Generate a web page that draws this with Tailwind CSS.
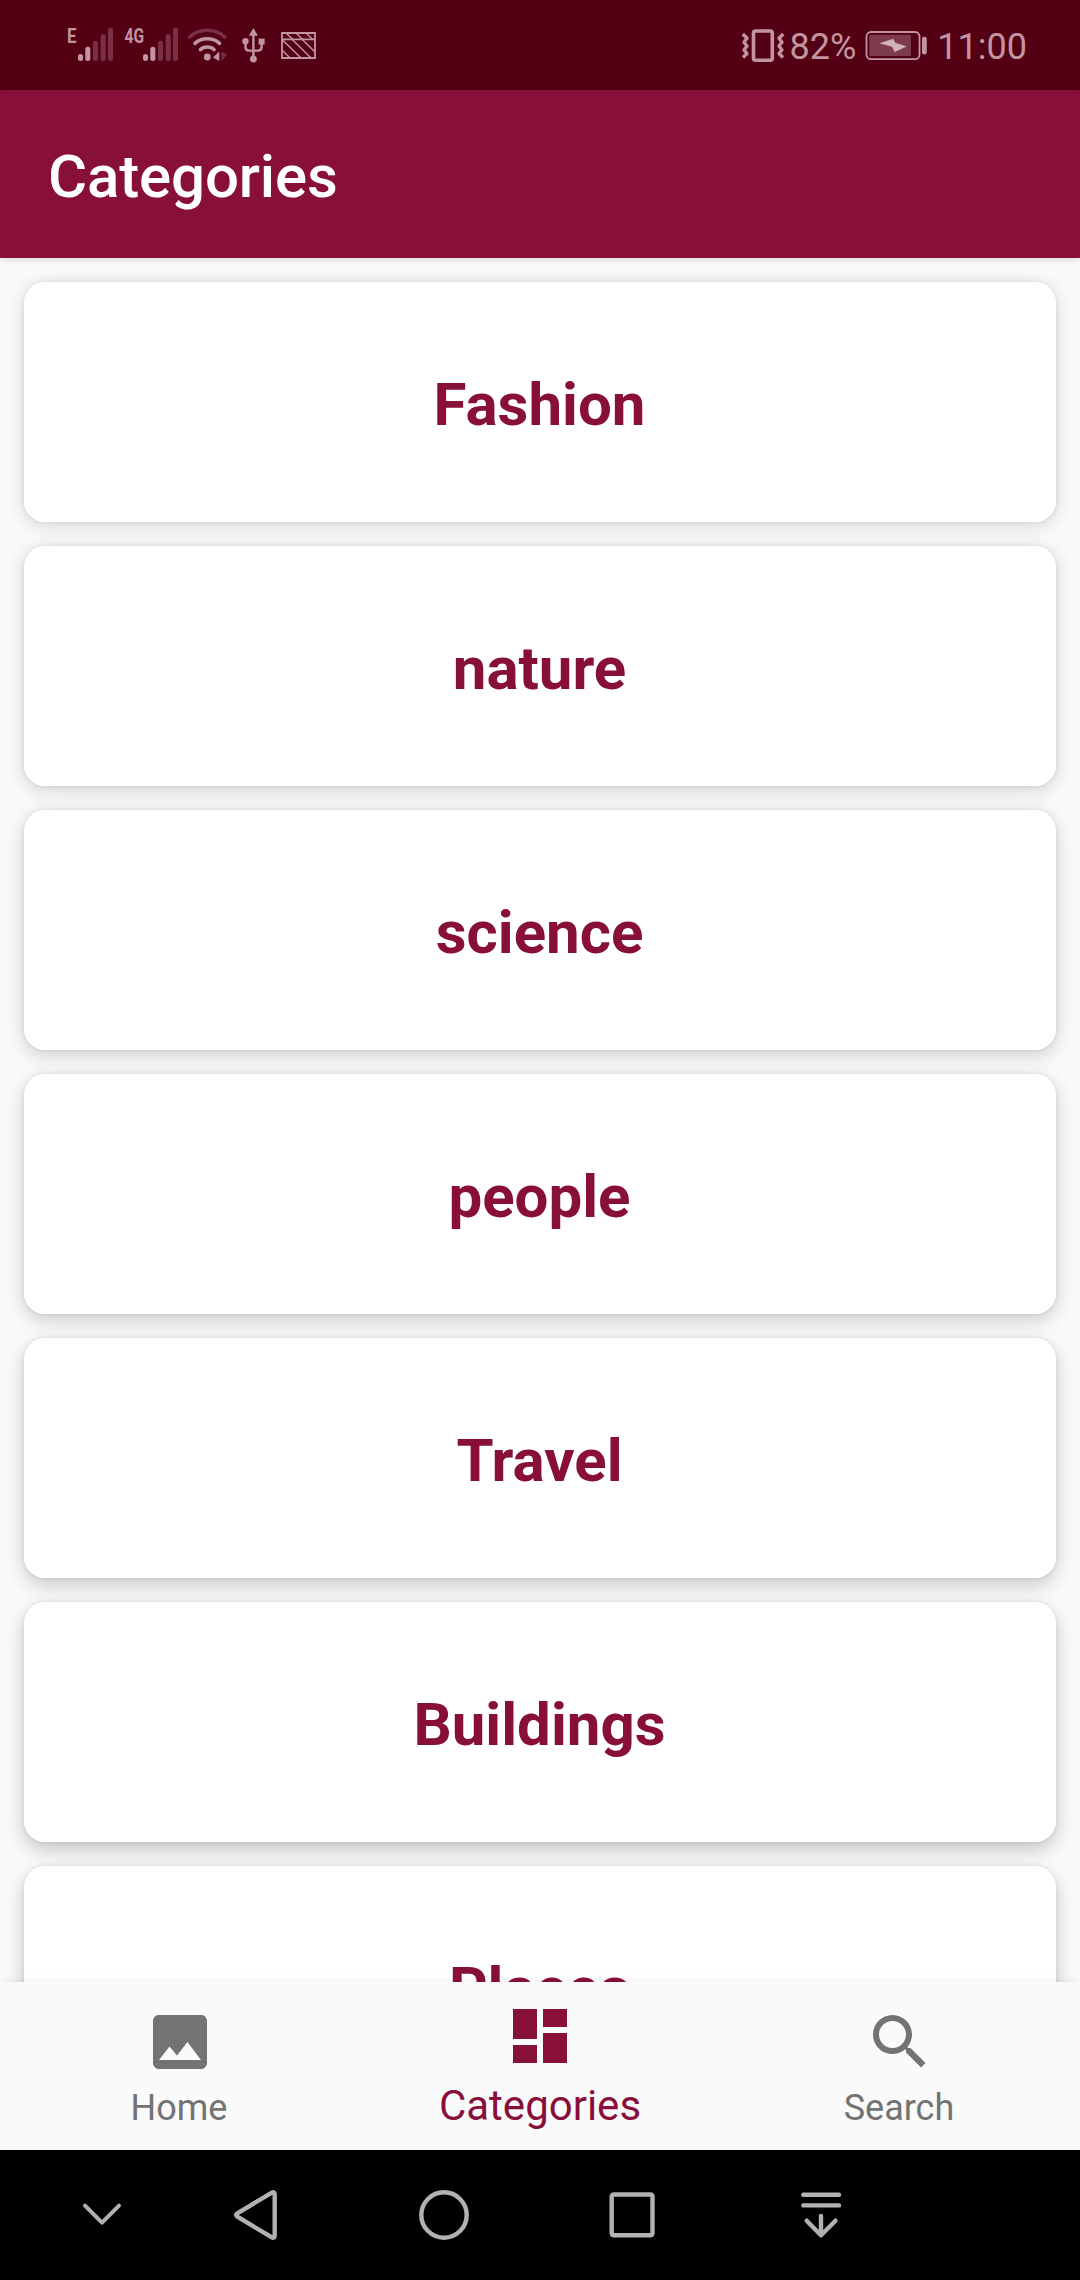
<!DOCTYPE html>
<html lang="en">
<head>
<meta charset="utf-8">
<title>Categories</title>
<script src="https://cdn.jsdelivr.net/npm/@tailwindcss/browser@4"></script>
</head>
<body class="w-[1080px] h-[2280px] flex flex-col overflow-hidden bg-[#fafafa] font-[Roboto,sans-serif]">

<!-- Status bar -->
<header class="h-[90px] shrink-0 flex items-center justify-between bg-[#530015] text-[#c294a0] pl-[66px] pr-[53px]">
  <div class="flex h-full">
    <svg class="w-[56px] h-[90px]" viewBox="66 0 56 90" fill="currentColor">
      <text x="67" y="42.7" font-size="20" font-weight="700" textLength="9.5" lengthAdjust="spacingAndGlyphs">E</text>
      <rect x="78" y="54" width="5" height="7" rx="2.5"/><rect x="85.3" y="46.7" width="5" height="14.3" rx="2.5"/>
      <g fill="#7a3043"><rect x="93" y="40.7" width="5" height="20.3" rx="2.5"/><rect x="100.7" y="34" width="5" height="27" rx="2.5"/><rect x="108" y="27.7" width="5" height="33.3" rx="2.5"/></g>
    </svg>
    <svg class="w-[62px] h-[90px]" viewBox="122 0 62 90" fill="currentColor">
      <text x="124.5" y="42.7" font-size="20" font-weight="700" textLength="19.5" lengthAdjust="spacingAndGlyphs">4G</text>
      <rect x="143" y="54" width="5" height="7" rx="2.5"/><rect x="150.3" y="46.7" width="5" height="14.3" rx="2.5"/>
      <g fill="#7a3043"><rect x="158" y="40.7" width="5" height="20.3" rx="2.5"/><rect x="165.7" y="34" width="5" height="27" rx="2.5"/><rect x="173" y="27.7" width="5" height="33.3" rx="2.5"/></g>
    </svg>
    <svg class="w-[54px] h-[90px]" viewBox="184 0 54 90" fill="none" stroke="currentColor" stroke-width="3.6" stroke-linecap="round">
      <path stroke="#7a3043" d="M189.7 37Q197 30.2 207.3 30.2T224.7 37"/>
      <path d="M195 43.3Q200 38.8 207.3 38.8T219.5 43.3M200.5 49.6Q203 47 207.3 47T214 49.6"/>
      <circle cx="207.3" cy="57" r="3.4" fill="currentColor" stroke="none"/>
      <path d="M219.3 51.5V61L213 57.5Z" fill="currentColor" stroke="none"/>
      <path d="M221.5 51.5V61L227 54.5Z" fill="#7a3043" stroke="none"/>
    </svg>
    <svg class="w-[36px] h-[90px]" viewBox="238 0 36 90" fill="currentColor">
      <path d="M253.4 28L258 35.8H248.8Z"/><circle cx="253.4" cy="59" r="3.4"/><circle cx="245.5" cy="41.3" r="3.2"/><rect x="258.6" y="38.6" width="6" height="6"/>
      <path fill="none" stroke="currentColor" stroke-width="2.4" d="M253.4 34V59M245.5 42V47Q245.5 50.6 249 50.6H258Q261.6 50.6 261.6 47V43"/>
    </svg>
    <svg class="w-[44px] h-[90px]" viewBox="274 0 44 90" fill="none" stroke="currentColor" stroke-width="1.8">
      <path d="M282 33H315V58H282ZM282 39.3H315"/>
      <path stroke-width="1.5" d="M286 33L292.5 39.3M296 33L302.5 39.3M306 33L312.5 39.3M282 39.5L301 58M292 39.3L311 58M302 39.3L315 52M282 50L290 58"/>
    </svg>
  </div>
  <div class="flex h-full items-center text-[36px] leading-[42px]">
    <svg class="w-[36px] h-[90px]" viewBox="741 0 36 90" fill="none" stroke="currentColor" stroke-width="3.6">
      <rect x="753.5" y="31" width="18.8" height="29.3" rx="2"/>
      <path stroke-width="3.4" stroke-linejoin="round" d="M742.8 34L747 38.3L744 42.2L747 46L744 50L747 53.5L743 57.5"/>
    </svg>
    <svg class="w-[9px] h-[90px] -ml-px mr-[5px]" viewBox="776 0 9 90" fill="none" stroke="currentColor" stroke-width="3.4" stroke-linejoin="round">
      <path d="M783.2 34L779 38.3L782 42.2L779 46L782 50L779 53.5L783 57.5"/>
    </svg>
    <span class="pt-[3px]">82%</span>
    <svg class="w-[64px] h-[90px] ml-[8px] mr-[9px]" viewBox="864 0 64 90">
      <rect x="866.5" y="32" width="53" height="27.2" rx="4.5" fill="none" stroke="currentColor" stroke-width="1.8"/>
      <rect x="869.3" y="34.7" width="41.7" height="21.3" rx="1.5" fill="#7f3b4e"/>
      <path fill="#d2b2bb" d="M879.3 43.3L893.3 38.7L895.3 42.7L906.7 46.6L894.7 52L892 46.7Z"/>
      <rect x="922" y="36.7" width="4.8" height="17.8" rx="2.2" fill="currentColor"/>
    </svg>
    <span class="pt-[3px]">11:00</span>
  </div>
</header>

<!-- App bar -->
<div class="relative z-10 h-[168px] shrink-0 flex items-center bg-[#880f3a] px-12 shadow-[0_1px_7px_rgba(0,0,0,0.16)]">
  <h1 class="text-white text-[60px] leading-[71px] font-medium pt-[5px] tracking-[-0.15px]">Categories</h1>
</div>

<!-- Category list -->
<main class="isolate flex-1 min-h-0 overflow-hidden flex flex-col gap-6 px-6 pt-6 text-[#880f3a] text-[60px] leading-[71px] font-bold">
  <div class="relative h-[240px] shrink-0 rounded-[21px] bg-white flex items-center justify-center pt-[5px] pr-px before:absolute before:inset-0 before:-z-10 before:rounded-[21px] before:shadow-[0_0_5px_rgba(0,0,0,0.09),0_3px_20px_rgba(0,0,0,0.15)]">Fashion</div>
  <div class="relative h-[240px] shrink-0 rounded-[21px] bg-white flex items-center justify-center pt-[5px] pr-px before:absolute before:inset-0 before:-z-10 before:rounded-[21px] before:shadow-[0_0_5px_rgba(0,0,0,0.09),0_4px_20px_rgba(0,0,0,0.16)]">nature</div>
  <div class="relative h-[240px] shrink-0 rounded-[21px] bg-white flex items-center justify-center pt-[5px] pr-px before:absolute before:inset-0 before:-z-10 before:rounded-[21px] before:shadow-[0_0_5px_rgba(0,0,0,0.09),0_5px_20px_rgba(0,0,0,0.175)]">science</div>
  <div class="relative h-[240px] shrink-0 rounded-[21px] bg-white flex items-center justify-center pt-[5px] pr-px before:absolute before:inset-0 before:-z-10 before:rounded-[21px] before:shadow-[0_0_5px_rgba(0,0,0,0.09),0_6px_20px_rgba(0,0,0,0.19)]">people</div>
  <div class="relative h-[240px] shrink-0 rounded-[21px] bg-white flex items-center justify-center pt-[5px] pr-px before:absolute before:inset-0 before:-z-10 before:rounded-[21px] before:shadow-[0_0_5px_rgba(0,0,0,0.09),0_7px_20px_rgba(0,0,0,0.2)]">Travel</div>
  <div class="relative h-[240px] shrink-0 rounded-[21px] bg-white flex items-center justify-center pt-[5px] pr-px before:absolute before:inset-0 before:-z-10 before:rounded-[21px] before:shadow-[0_0_5px_rgba(0,0,0,0.09),0_8px_20px_rgba(0,0,0,0.21)]">Buildings</div>
  <div class="relative h-[240px] shrink-0 rounded-[21px] bg-white flex items-center justify-center pt-[5px] pr-px before:absolute before:inset-0 before:-z-10 before:rounded-[21px] before:shadow-[0_0_5px_rgba(0,0,0,0.09),0_9px_20px_rgba(0,0,0,0.22)]">Places</div>
</main>

<!-- Bottom navigation -->
<nav class="relative z-10 h-[168px] shrink-0 grid grid-cols-3 bg-[#fafafa] text-[#737373] text-[36px] leading-[42px] shadow-[0_0_10px_rgba(0,0,0,0.07)]">
  <a class="flex flex-col items-center pt-6">
    <svg class="size-[72px]" viewBox="0 0 24 24" fill="currentColor"><path d="M21 19V5c0-1.1-.9-2-2-2H5c-1.1 0-2 .9-2 2v14c0 1.1.9 2 2 2h14c1.100 0 2-.9 2-2zM8.500 13.500l2.500 3.010L14.500 12l4.500 6H5l3.500-4.500z"/></svg>
    <span class="mt-[9px] mr-[2px]">Home</span>
  </a>
  <a class="flex flex-col items-center pt-[18px] text-[#880f3a] text-[42px] leading-[49px]">
    <svg class="size-[72px]" viewBox="0 0 24 24" fill="currentColor"><path d="M3 13h8V3H3v10zm0 8h8v-6H3v6zm10 0h8V11h-8v10zm0-18v6h8V3h-8z"/></svg>
    <span class="mt-[9px]">Categories</span>
  </a>
  <a class="flex flex-col items-center pt-6">
    <svg class="size-[72px]" viewBox="0 0 24 24" fill="currentColor"><path d="M15.500 14h-.79l-.28-.27C15.410 12.590 16 11.110 16 9.500 16 5.910 13.090 3 9.500 3S3 5.910 3 9.500 5.910 16 9.500 16c1.610 0 3.090-.59 4.230-1.570l.27.28v.79l5 4.990L20.490 19l-4.990-5zm-6 0C7.010 14 5 11.990 5 9.500S7.010 5 9.500 5 14 7.010 14 9.500 11.990 14 9.500 14z"/></svg>
    <span class="mt-[9px] mr-[2px]">Search</span>
  </a>
</nav>

<!-- System navigation -->
<footer class="relative z-10 h-[130px] shrink-0 flex bg-black pl-[72px] gap-[122px] text-[#b2b2b2]">
  <svg class="w-[60px] h-[130px]" viewBox="72 0 60 130" fill="none" stroke="currentColor" stroke-width="4" stroke-linecap="round" stroke-linejoin="round"><path d="M85 55.700L102 72.700L119 55.700"/></svg>
  <svg class="w-[60px] h-[130px] -ml-[30px]" viewBox="224 0 60 130" fill="none" stroke="currentColor" stroke-width="4.4" stroke-linejoin="round"><path d="M237.300 63.300L271.500 42.800Q274.700 41.300 274.700 44.500V85.500Q274.700 88.700 271.500 87.200L237.300 66.700Q235 65 237.300 63.300Z"/></svg>
  <svg class="w-[60px] h-[130px] ml-[8px]" viewBox="414 0 60 130" fill="none" stroke="currentColor" stroke-width="4.400"><circle cx="444" cy="65" r="22.700"/></svg>
  <svg class="w-[60px] h-[130px] ml-[6px]" viewBox="602 0 60 130" fill="none" stroke="currentColor" stroke-width="4.400"><rect x="611.700" y="44.500" width="40.800" height="40.800" rx="2"/></svg>
  <svg class="w-[60px] h-[130px] ml-[7px]" viewBox="791 0 60 130" fill="none" stroke="currentColor" stroke-width="4.400" stroke-linecap="round" stroke-linejoin="round"><path d="M803.300 44.700H839M803.300 55.400H839M821 66V85.300M806.700 70.700L821 85.300L835.500 70.700"/></svg>
</footer>
</body>
</html>
